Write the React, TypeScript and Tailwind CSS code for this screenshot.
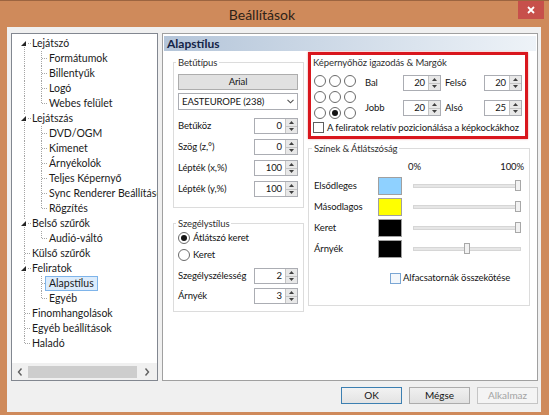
import React from 'react';
import clsx from 'clsx';

type TreeNode = { label: string; level: 0 | 1; exp?: boolean; last?: boolean; sel?: boolean };

const nodes: TreeNode[] = [
  { label: 'Lejátszó', level: 0, exp: true },
  { label: 'Formátumok', level: 1 },
  { label: 'Billentyűk', level: 1 },
  { label: 'Logó', level: 1 },
  { label: 'Webes felület', level: 1, last: true },
  { label: 'Lejátszás', level: 0, exp: true },
  { label: 'DVD/OGM', level: 1 },
  { label: 'Kimenet', level: 1 },
  { label: 'Árnyékolók', level: 1 },
  { label: 'Teljes Képernyő', level: 1 },
  { label: 'Sync Renderer Beállítások', level: 1 },
  { label: 'Rögzítés', level: 1, last: true },
  { label: 'Belső szűrők', level: 0, exp: true },
  { label: 'Audió-váltó', level: 1, last: true },
  { label: 'Külső szűrők', level: 0 },
  { label: 'Feliratok', level: 0, exp: true },
  { label: 'Alapstílus', level: 1, sel: true },
  { label: 'Egyéb', level: 1, last: true },
  { label: 'Finomhangolások', level: 0 },
  { label: 'Egyéb beállítások', level: 0 },
  { label: 'Haladó', level: 0, last: true },
];

const dot = { stroke: '#a5a5a5', strokeWidth: 1, strokeDasharray: '1 1' };

// one 17px column of tree connector lines
function Guide({ top, bottom, dash, exp }: { top: boolean; bottom: boolean; dash: boolean; exp?: boolean }) {
  return (
    <svg width="17" height="15" viewBox="0 0 17 15" className="shrink-0" shapeRendering="crispEdges">
      {top && <line x1="9.5" y1="0" x2="9.5" y2={exp ? 4 : 7.5} {...dot} />}
      {bottom && <line x1="9.5" y1={exp ? 11 : 7.5} x2="9.5" y2="15" {...dot} />}
      {dash && <line x1={exp ? 13 : 10} y1="7.5" x2="16" y2="7.5" {...dot} />}
      {exp && <polygon points="11,5 11,10 6,10" fill="#262626" shapeRendering="auto" />}
    </svg>
  );
}

function Tree() {
  return (
    <div className="flex h-[348px] w-[147px] shrink-0 flex-col border border-[#828790] bg-white">
      <div className="flex-1 overflow-hidden pl-[3px] pt-[2px]">
        {nodes.map((n, i) => (
          <div key={n.label} className="flex h-[15px] items-center whitespace-nowrap">
            {n.level === 0 ? (
              <Guide top={i > 0} bottom={!n.last} dash exp={n.exp} />
            ) : (
              <>
                <Guide top bottom dash={false} />
                <Guide top bottom={!n.last} dash />
              </>
            )}
            <span
              className={clsx(
                '-ml-[4px] flex h-[15px] items-center border px-[3px] text-[10.5px] leading-none text-[#1a1a1a]',
                n.sel ? 'border-[#7eb4ea] bg-[#dcecfc]' : 'border-transparent'
              )}
            >
              {n.label}
            </span>
          </div>
        ))}
      </div>
      <div className="flex h-[17px] items-center bg-[#f0f0f0]">
        <div className="flex w-[16px] justify-center">
          <svg width="6" height="8" viewBox="0 0 6 8"><path d="M4.5 0.5 L1.5 4 L4.5 7.5" fill="none" stroke="#606060" strokeWidth="1.4" /></svg>
        </div>
        <div className="h-[12px] w-[109px] bg-[#cdcdcd]" />
        <div className="flex flex-1 justify-center">
          <svg width="6" height="8" viewBox="0 0 6 8"><path d="M1.5 0.5 L4.5 4 L1.5 7.5" fill="none" stroke="#606060" strokeWidth="1.4" /></svg>
        </div>
      </div>
    </div>
  );
}

function Arrow({ up }: { up?: boolean }) {
  return (
    <svg width="5" height="3" viewBox="0 0 5 3">
      <polygon points={up ? '0,3 5,3 2.5,0' : '0,0 5,0 2.5,3'} fill="#404040" />
    </svg>
  );
}

function Spin({ value, className }: { value: string; className: string }) {
  return (
    <div className={clsx('flex h-[16px] shrink-0 border border-[#abadb3] bg-white', className)}>
      <div className="flex flex-1 items-center justify-end pr-[3px] leading-none">{value}</div>
      <div className="flex w-[12px] flex-col border-l border-[#c4c4c4] bg-[#e8e8e8]">
        <div className="flex flex-1 items-center justify-center border-b border-[#c4c4c4]"><Arrow up /></div>
        <div className="flex flex-1 items-center justify-center"><Arrow /></div>
      </div>
    </div>
  );
}

function Radio({ on }: { on?: boolean }) {
  return (
    <span className="flex h-[12px] w-[12px] shrink-0 items-center justify-center rounded-full border border-[#6a6a6a] bg-white">
      {on && <span className="h-[6px] w-[6px] rounded-full bg-[#141414]" />}
    </span>
  );
}

function Field({ label, value }: { label: string; value: string }) {
  return (
    <div className="flex h-[16px] items-center justify-between">
      <span className="leading-none">{label}</span>
      <Spin value={value} className="w-[44px]" />
    </div>
  );
}

function Slider({ pos }: { pos: number }) {
  return (
    <div className="relative flex h-[17px] w-[108px] items-center">
      <div className="h-[4px] w-full border border-[#d6d6d6] bg-[#e6e6e6]" />
      <div className="absolute top-[3px] h-[11px] w-[6px] border border-[#a8a8a8] bg-[#f2f2f2]" style={{ left: pos }} />
    </div>
  );
}

const colors = [
  { label: 'Elsődleges', swatch: 'bg-[#8fd1ff]', pos: 102 },
  { label: 'Másodlagos', swatch: 'bg-[#ffff00]', pos: 102 },
  { label: 'Keret', swatch: 'bg-black', pos: 102 },
  { label: 'Árnyék', swatch: 'bg-black', pos: 51 },
];

function Page() {
  return (
    <div className="flex h-[348px] flex-1 flex-col border border-[#a0a0a0] bg-white px-[1px] pt-[2px] text-[9.5px] tracking-[-0.1px]">
      <div className="flex h-[15px] items-center bg-gradient-to-r from-[#b4c5d9] to-[#eef3f8] pl-[3px] text-[12px] font-bold leading-none tracking-normal text-[#142446]">
        Alapstílus
      </div>
      <div className="flex gap-[4px] pl-[9px]">
        {/* left column */}
        <div className="flex w-[131px] flex-col gap-[9px] pt-[5px]">
          <fieldset className="border border-[#dcdcdc] pb-[10px] pl-[4px] pr-[5px]">
            <legend className="-ml-[2px] px-[2px] leading-[13px] text-[#303030]">Betűtípus</legend>
            <div className="mt-[5px] flex h-[16px] items-center justify-center border border-[#adadad] bg-[#e1e1e1] leading-none">
              Arial
            </div>
            <div className="mt-[3px] flex h-[17px] items-center justify-between border border-[#abadb3] bg-white pl-[3px] pr-[3px] leading-none">
              <span>EASTEUROPE (238)</span>
              <svg width="7" height="5" viewBox="0 0 7 5"><path d="M0.5 0.8 L3.5 3.8 L6.5 0.8" fill="none" stroke="#505050" strokeWidth="1.1" /></svg>
            </div>
            <div className="mt-[8px] flex flex-col gap-[5px]">
              <Field label="Betűköz" value="0" />
              <Field label="Szög (z,°)" value="0" />
              <Field label="Lépték (x,%)" value="100" />
              <Field label="Lépték (y,%)" value="100" />
            </div>
          </fieldset>
          <fieldset className="border border-[#dcdcdc] pb-[7px] pl-[4px] pr-[5px]">
            <legend className="-ml-[2px] px-[2px] leading-[13px] text-[#303030]">Szegélystílus</legend>
            <div className="mt-[2px] flex h-[12px] items-center gap-[3px] leading-none">
              <Radio on /> Átlátszó keret
            </div>
            <div className="mt-[5px] flex h-[12px] items-center gap-[3px] leading-none">
              <Radio /> Keret
            </div>
            <div className="mt-[7px] flex flex-col gap-[4px]">
              <Field label="Szegélyszélesség" value="2" />
              <Field label="Árnyék" value="3" />
            </div>
          </fieldset>
        </div>

        {/* right column */}
        <div className="flex w-[222px] flex-col">
          <div className="mt-[1px] w-[220px] border-[3px] border-[#d9161d] pb-[3px] pl-[2px] pt-[1px] shadow-[0_0_2px_rgba(200,0,0,0.4)]">
            <div className="leading-[13px] text-[#303030]">Képernyőhöz igazodás &amp; Margók</div>
            <div className="mt-[3px] flex">
              <div className="ml-[1px] mt-[3px] grid grid-cols-3 gap-x-[3px] gap-y-[4px]">
                {[0, 1, 2, 3, 4, 5, 6, 7, 8].map((k) => (
                  <Radio key={k} on={k === 7} />
                ))}
              </div>
              <div className="ml-[9px] flex flex-col gap-[9px] pt-[3px]">
                <div className="flex h-[16px] items-center leading-none">
                  <span className="w-[38px]">Bal</span>
                  <Spin value="20" className="w-[38px]" />
                  <span className="ml-[4px] w-[39px]">Felső</span>
                  <Spin value="20" className="w-[38px]" />
                </div>
                <div className="flex h-[16px] items-center leading-none">
                  <span className="w-[38px]">Jobb</span>
                  <Spin value="20" className="w-[38px]" />
                  <span className="ml-[4px] w-[39px]">Alsó</span>
                  <Spin value="25" className="w-[38px]" />
                </div>
              </div>
            </div>
            <div className="mt-[3px] flex items-center gap-[3px] whitespace-nowrap leading-none">
              <span className="h-[11px] w-[11px] shrink-0 border border-[#5f5f5f] bg-white" />
              A feliratok relatív pozicionálása a képkockákhoz
            </div>
          </div>

          <fieldset className="mt-[3px] border border-[#dcdcdc] pb-[21px] pl-[5px] pr-[5px]">
            <legend className="-ml-[2px] px-[2px] leading-[13px] text-[#303030]">Színek &amp; Átlátszóság</legend>
            <div className="ml-[94px] mt-[7px] flex w-[116px] justify-between leading-none">
              <span>0%</span>
              <span>100%</span>
            </div>
            <div className="mt-[5px] flex flex-col gap-[3px]">
              {colors.map((c) => (
                <div key={c.label} className="flex h-[18px] items-center leading-none">
                  <span className="w-[64px]">{c.label}</span>
                  <span className={clsx('h-[18px] w-[24px] border border-[#a0a0a0]', c.swatch)} />
                  <span className="ml-[11px]">
                    <Slider pos={c.pos} />
                  </span>
                </div>
              ))}
            </div>
            <div className="ml-[76px] mt-[15px] flex items-center gap-[2px] whitespace-nowrap leading-none">
              <span className="h-[11px] w-[11px] shrink-0 border border-[#7aa6d4] bg-[#f3f7fb]" />
              Alfacsatornák összekötése
            </div>
          </fieldset>
        </div>
      </div>
    </div>
  );
}

export default function App() {
  return (
    <div className="flex h-[415px] w-[549px] flex-col border-t border-[#9c6440] bg-[#cf8a5b] [font-family:Lato,sans-serif] text-[#141414]">
      <div className="flex h-[26px] shrink-0">
        <div className="flex flex-1 items-center justify-center pl-[6px] pt-[1px] text-[14px] text-[#2e2218]">Beállítások</div>
        <div className="mr-[5px] flex h-[18px] w-[26px] items-center justify-center bg-[#c7504b]">
          <svg width="8" height="8" viewBox="0 0 8 8">
            <path d="M1 1 L7 7 M7 1 L1 7" stroke="white" strokeWidth="1.8" />
          </svg>
        </div>
      </div>
      <div className="mx-[7px] mr-[8px] mb-[4px] flex flex-1 flex-col bg-[#f0f0f0] pb-[8px] pl-[4px] pr-[3px] pt-[6px]">
        <div className="flex gap-[4px]">
          <Tree />
          <Page />
        </div>
        <div className="mt-[6px] flex justify-end gap-[7px] text-[10px]">
          <div className="flex h-[17px] w-[61px] items-center justify-center border border-[#3c7fb1] bg-gradient-to-b from-[#f2f2f2] to-[#e3e3e3]">OK</div>
          <div className="flex h-[17px] w-[61px] items-center justify-center border border-[#acacac] bg-gradient-to-b from-[#f0f0f0] to-[#e1e1e1]">Mégse</div>
          <div className="flex h-[17px] w-[61px] items-center justify-center border border-[#c5c5c5] bg-[#f4f4f4] text-[#a3a3a3]">Alkalmaz</div>
        </div>
      </div>
    </div>
  );
}
